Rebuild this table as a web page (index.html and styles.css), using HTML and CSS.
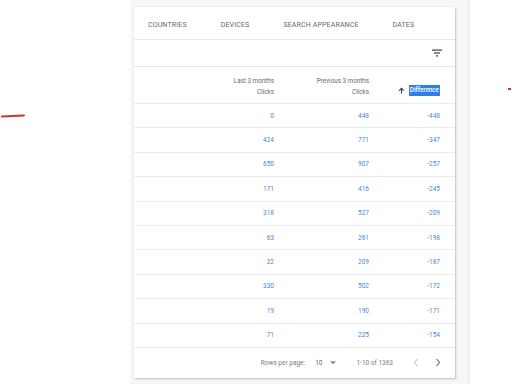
FILE: index.html
```html
<!DOCTYPE html>
<html>
<head>
<meta charset="utf-8">
<link rel="stylesheet" href="styles.css">
</head>
<body>
<div class="page">
  <div class="left">
    <span class="mark"></span>
  </div>
  <div class="panel">
    <div class="card">
      <div class="tabs">
        <span class="tab">COUNTRIES</span>
        <span class="tab">DEVICES</span>
        <span class="tab">SEARCH APPEARANCE</span>
        <span class="tab">DATES</span>
      </div>
      <div class="filterbar">
        <svg class="filter" width="10" height="8" viewBox="0 0 10 8"><rect x="0" y="0.5" width="10" height="1.2" fill="#3c4043"/><rect x="2" y="3.4" width="6" height="1.2" fill="#3c4043"/><rect x="4" y="6.3" width="2" height="1.2" fill="#3c4043"/></svg>
      </div>
      <div class="row head">
        <div class="cell"><span>Last 3 months</span><span>Clicks</span></div>
        <div class="cell"><span>Previous 3 months</span><span>Clicks</span></div>
        <div class="cell diffcell">
          <svg class="arrow" width="7" height="7" viewBox="0 0 8 8"><path d="M4 7.5V1.5M1.3 4.2L4 1.5L6.7 4.2" stroke="#3c4043" stroke-width="1.2" fill="none"/></svg>
          <span class="sel">Difference</span>
        </div>
      </div>
      <div class="row data"><div class="cell">0</div><div class="cell">448</div><div class="cell">-448</div></div>
      <div class="row data"><div class="cell">424</div><div class="cell">771</div><div class="cell">-347</div></div>
      <div class="row data"><div class="cell">650</div><div class="cell">907</div><div class="cell">-257</div></div>
      <div class="row data"><div class="cell">171</div><div class="cell">416</div><div class="cell">-245</div></div>
      <div class="row data"><div class="cell">318</div><div class="cell">527</div><div class="cell">-209</div></div>
      <div class="row data"><div class="cell">63</div><div class="cell">261</div><div class="cell">-198</div></div>
      <div class="row data"><div class="cell">22</div><div class="cell">209</div><div class="cell">-187</div></div>
      <div class="row data"><div class="cell">330</div><div class="cell">502</div><div class="cell">-172</div></div>
      <div class="row data"><div class="cell">19</div><div class="cell">190</div><div class="cell">-171</div></div>
      <div class="row data"><div class="cell">71</div><div class="cell">225</div><div class="cell">-154</div></div>
      <div class="footer">
        <span class="rpp">Rows per page:</span>
        <span class="num">10</span>
        <svg class="dd" width="6" height="4" viewBox="0 0 7 4"><path d="M0 0H7L3.5 3.5Z" fill="#8a8a8a"/></svg>
        <span class="range">1-10 of 1363</span>
        <svg class="chev" width="6" height="9" viewBox="0 0 6 9"><path d="M4.5 1L1.5 4.5L4.5 8" stroke="#c4c4c4" stroke-width="1.1" fill="none"/></svg>
        <svg class="chev" width="6" height="9" viewBox="0 0 6 9"><path d="M1.5 1L4.5 4.5L1.5 8" stroke="#5f6368" stroke-width="1.1" fill="none"/></svg>
      </div>
    </div>
  </div>
  <div class="right">
    <span class="dot"></span>
  </div>
</div>
</body>
</html>
```
FILE: styles.css
```css
html, body {
  margin: 0;
  padding: 0;
  background: #ffffff;
}
body {
  width: 512px;
  height: 384px;
  overflow: hidden;
  font-family: Roboto, "Liberation Sans", Arial, sans-serif;
}
.page {
  display: flex;
  width: 512px;
  height: 384px;
}
.left {
  width: 130px;
  position: relative;
}
.mark {
  position: absolute;
  left: 1px;
  top: 115px;
  width: 24px;
  height: 2px;
  background: #d32f2f;
  border-radius: 1px;
  transform: rotate(-3deg);
}
.panel {
  width: 340px;
  background: #f7f7f7;
  padding: 7px 0 0 4px;
  box-sizing: border-box;
  border-right: 2px solid #eeeeee;
}
.card {
  width: 321px;
  height: 371px;
  background: #ffffff;
  box-shadow: 1px 1px 2px rgba(0,0,0,0.22), 0 0 1px rgba(0,0,0,0.12);
  display: flex;
  flex-direction: column;
}
.tabs {
  height: 33px;
  border-bottom: 1px solid #e6e6e6;
  display: flex;
  align-items: center;
  padding-left: 14px;
  padding-top: 3px;
  gap: 34px;
  box-sizing: border-box;
}
.tab {
  font-size: 7px;
  color: #66696d;
  letter-spacing: 0.15px;
}
.filterbar {
  height: 27px;
  border-bottom: 1px solid #e6e6e6;
  display: flex;
  align-items: center;
  justify-content: flex-end;
  padding-right: 13px;
  box-sizing: border-box;
}
.row {
  display: grid;
  grid-template-columns: 140px 95px 71px;
  border-bottom: 1px solid #ececec;
  box-sizing: border-box;
}
.head {
  height: 37px;
  align-items: center;
  padding-top: 3px;
}
.head .cell {
  display: flex;
  flex-direction: column;
  align-items: flex-end;
  font-size: 6.3px;
  line-height: 11px;
  color: #66696d;
}
.head .diffcell {
  flex-direction: row;
  align-items: center;
  justify-content: flex-end;
  gap: 4px;
  padding-top: 8px;
}
.sel {
  background: #2f7fe8;
  color: #ffffff;
  font-weight: 500;
  padding: 0 1px;
  line-height: 11px;
}
.data {
  height: 24.4px;
  align-items: center;
}
.data .cell {
  text-align: right;
  font-size: 6.5px;
  color: #4a85d8;
}
.footer {
  height: 30px;
  display: flex;
  align-items: center;
  justify-content: flex-end;
  padding-right: 14px;
  font-size: 6.5px;
  color: #7d7d7d;
  box-sizing: border-box;
}
.rpp { margin-right: 10px; }
.num { margin-right: 8px; color: #5f6368; }
.dd { margin-right: 20px; }
.range { margin-right: 20px; }
.chev + .chev { margin-left: 16px; }
.right {
  flex: 1;
  position: relative;
}
.dot {
  position: absolute;
  left: 38px;
  top: 88px;
  width: 3px;
  height: 2px;
  background: #d32f2f;
}
```
